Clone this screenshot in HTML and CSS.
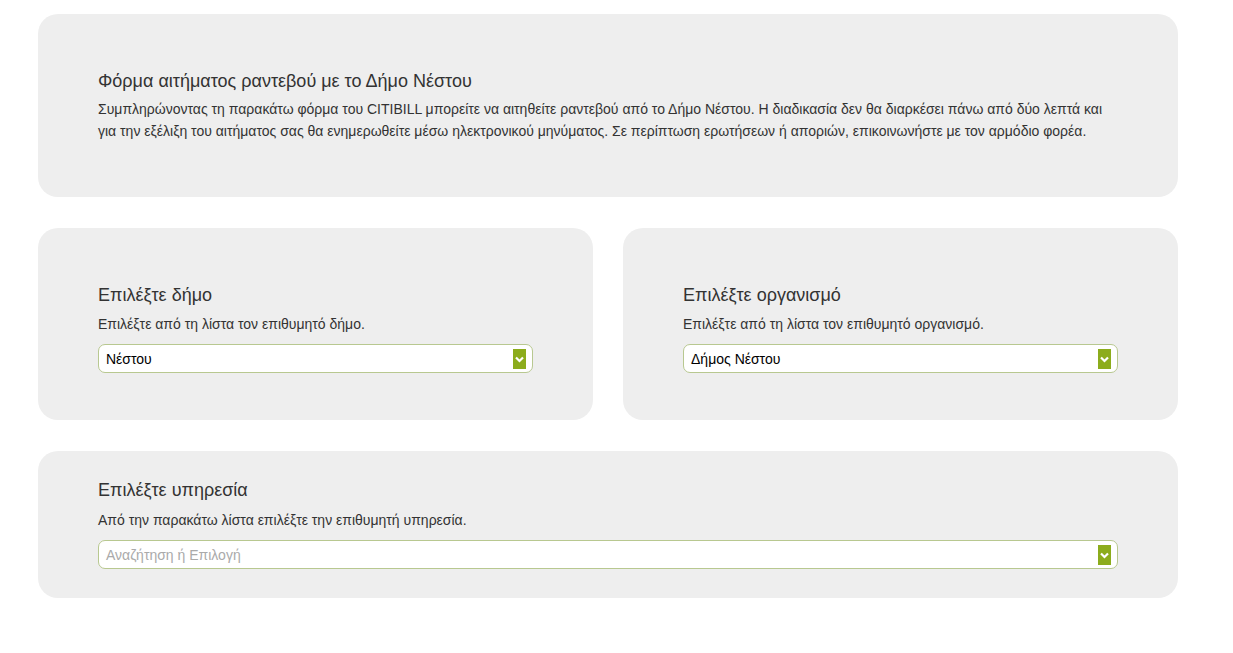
FILE: index.html
```html
<!DOCTYPE html>
<html lang="el">
<head>
<meta charset="utf-8">
<title>Αίτημα ραντεβού</title>
<link rel="stylesheet" href="styles.css">
</head>
<body>
<main class="page">
  <section class="card card-intro">
    <h2 class="card-title">Φόρμα αιτήματος ραντεβού με το Δήμο Νέστου</h2>
    <p class="card-text">Συμπληρώνοντας τη παρακάτω φόρμα του CITIBILL μπορείτε να αιτηθείτε ραντεβού από το Δήμο Νέστου. Η διαδικασία δεν θα διαρκέσει πάνω από δύο λεπτά και για την εξέλιξη του αιτήματος σας θα ενημερωθείτε μέσω ηλεκτρονικού μηνύματος. Σε περίπτωση ερωτήσεων ή αποριών, επικοινωνήστε με τον αρμόδιο φορέα.</p>
  </section>

  <div class="row">
    <section class="card card-half">
      <h2 class="card-title">Επιλέξτε δήμο</h2>
      <p class="card-text">Επιλέξτε από τη λίστα τον επιθυμητό δήμο.</p>
      <div class="select">
        <span class="select-value">Νέστου</span>
        <span class="select-arrow"><svg width="13" height="20" viewBox="0 0 13 20"><path d="M3 8.5 L6.5 12 L10 8.5" fill="none" stroke="#fff" stroke-width="2.2"/></svg></span>
      </div>
    </section>
    <section class="card card-half">
      <h2 class="card-title">Επιλέξτε οργανισμό</h2>
      <p class="card-text">Επιλέξτε από τη λίστα τον επιθυμητό οργανισμό.</p>
      <div class="select">
        <span class="select-value">Δήμος Νέστου</span>
        <span class="select-arrow"><svg width="13" height="20" viewBox="0 0 13 20"><path d="M3 8.5 L6.5 12 L10 8.5" fill="none" stroke="#fff" stroke-width="2.2"/></svg></span>
      </div>
    </section>
  </div>

  <section class="card card-service">
    <h2 class="card-title">Επιλέξτε υπηρεσία</h2>
    <p class="card-text">Από την παρακάτω λίστα επιλέξτε την επιθυμητή υπηρεσία.</p>
    <div class="select">
      <span class="select-value placeholder">Αναζήτηση ή Επιλογή</span>
      <span class="select-arrow"><svg width="13" height="20" viewBox="0 0 13 20"><path d="M3 8.5 L6.5 12 L10 8.5" fill="none" stroke="#fff" stroke-width="2.2"/></svg></span>
    </div>
  </section>
</main>
</body>
</html>
```

FILE: styles.css
```css
html, body {
  margin: 0;
  padding: 0;
  background: #ffffff;
}
body {
  font-family: "Liberation Sans", Arial, sans-serif;
  color: #333333;
}
.page {
  width: 1140px;
  margin-left: 38px;
  padding-top: 14px;
  display: flex;
  flex-direction: column;
  gap: 31px;
}
.row {
  display: flex;
  gap: 30px;
}
.card {
  background: #eeeeee;
  border-radius: 20px;
  padding: 0 60px;
}
.card-half {
  flex: 1 1 0;
  padding-top: 55px;
  padding-bottom: 47px;
}
.card-intro {
  padding-top: 55px;
  padding-bottom: 55px;
}
.card-service {
  padding-top: 27px;
  padding-bottom: 29px;
}
.card-title {
  margin: 0;
  font-size: 18px;
  font-weight: normal;
  line-height: 24px;
  color: #333333;
}
.card-text {
  margin: 6px 0 0;
  font-size: 14px;
  line-height: 22px;
  color: #333333;
}
.card-intro .card-text {
  margin-top: 5px;
}
.card-service .card-text {
  margin-top: 7px;
}
.select {
  margin-top: 9px;
  height: 29px;
  box-sizing: border-box;
  border: 1px solid #b8c890;
  border-radius: 7px;
  background: #ffffff;
  display: flex;
  align-items: center;
  justify-content: space-between;
  padding: 0 6px 0 7px;
}
.select-value {
  font-size: 14px;
  color: #000000;
}
.select-value.placeholder {
  color: #aaaaaa;
}
.select-arrow {
  display: flex;
  width: 13px;
  height: 20px;
  background: #8cac1c;
}
```
